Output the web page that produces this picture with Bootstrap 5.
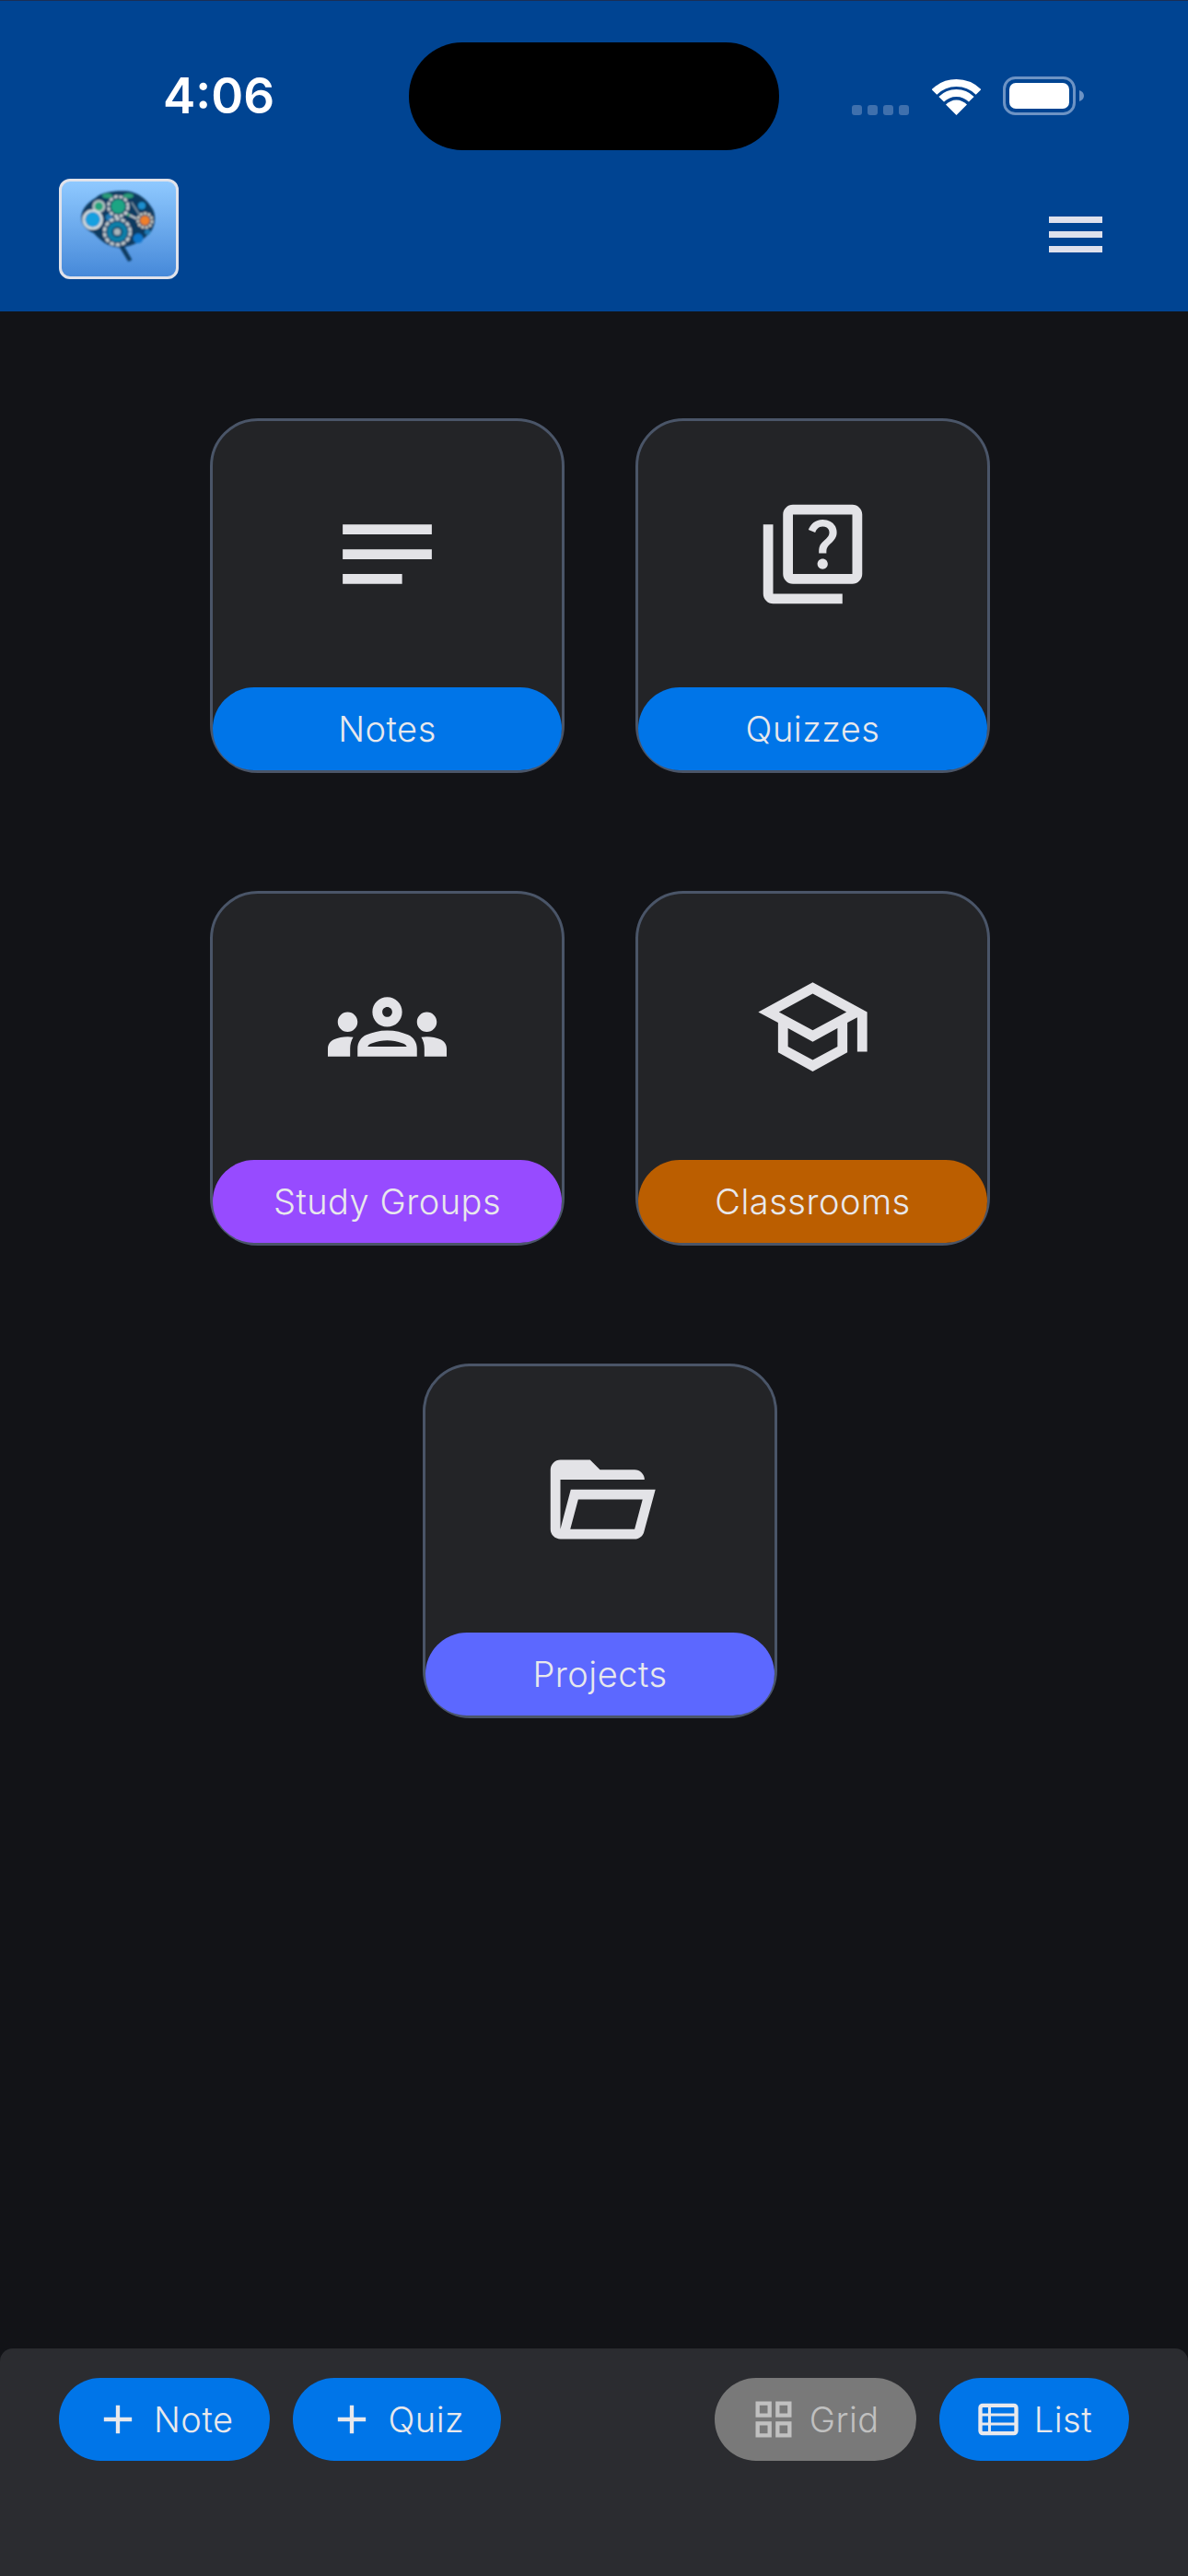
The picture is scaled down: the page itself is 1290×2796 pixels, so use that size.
<!DOCTYPE html>
<html lang="en">
<head>
  <meta charset="UTF-8">
  <meta name="viewport" content="width=device-width, initial-scale=1.0">
  <link href="https://cdn.jsdelivr.net/npm/bootstrap@5.3.2/dist/css/bootstrap.min.css" rel="stylesheet">
  <style>
    body {
      background-color: #121317;
      font-family: "Inter", "Liberation Sans", sans-serif;
      color: #e4e4e8;
    }
    .app-head {
      background-color: #004492;
      border-top: 1px solid #1b2f55;
      height: 338px;
    }
    .status-row {
      padding-top: 45px;
      height: 162px;
    }
    .status-left {
      width: 444px;
      padding-left: 177px;
    }
    .status-time {
      font-size: 53px;
      font-weight: 600;
      line-height: 1;
      color: #fff;
    }
    .island {
      width: 402px;
      height: 117px;
      background: #000;
      border-radius: 58px;
    }
    .status-right {
      padding-left: 79px;
      height: 117px;
      padding-bottom: 38px;
    }
    .sig-dot {
      width: 11px;
      height: 11px;
      border-radius: 3px;
      background: #3f70ad;
    }
    .sig-dots {
      gap: 6px;
    }
    .wifi-ico {
      margin-left: 25px;
    }
    .batt-ico {
      margin-left: 24px;
    }
    .app-nav {
      padding: 31px 93px 0 64px;
    }
    .logo-box {
      width: 130px;
      height: 109px;
      border: 3px solid #e0e2ea;
      border-radius: 12px;
      background: linear-gradient(#8fc9ff, #4689d9);
    }
    .menu-btn {
      gap: 9px;
      margin-top: 12px;
    }
    .menu-btn span {
      width: 58px;
      height: 7px;
      background: #dfe1ec;
    }
    .tile-wrap {
      padding: 116px 0 0 13px;
      column-gap: 77px;
      row-gap: 128px;
      width: 860px;
      margin-left: auto;
      margin-right: auto;
    }
    .tile {
      width: 385px;
      height: 385px;
      background: #232427;
      border: 3px solid #4a5568;
      border-radius: 52px;
    }
    .tile-ico {
      width: 129px;
      height: 129px;
      fill: #e3e3e7;
    }
    .tile-label {
      height: 90px;
      border-radius: 45px;
      font-size: 38px;
      font-weight: 300;
      letter-spacing: .5px;
      color: #e8e8ec;
    }
    .lbl-blue { background: #0075e8; }
    .lbl-purple { background: #974bff; }
    .lbl-orange { background: #bb5e00; }
    .lbl-indigo { background: #5c68ff; }
    .app-foot {
      background: #2b2c30;
      height: 247px;
      border-radius: 14px 14px 0 0;
      padding: 32px 64px 0;
    }
    .foot-btn {
      height: 90px;
      padding: 0 40px 0 38px;
      gap: 13px;
      border: 0;
      font-size: 38px;
      font-weight: 300;
      letter-spacing: .5px;
      color: #e8e8ec;
      background: #0075e8;
    }
    .foot-btn.off {
      background: #797979;
      color: #c0c0c0;
    }
    .foot-btn svg {
      width: 52px;
      height: 52px;
      fill: currentColor;
    }
    .foot-gap {
      gap: 25px;
    }
  </style>
  <title>Dashboard</title>
</head>
<body class="d-flex flex-column min-vh-100">
  <header class="app-head">
    <div class="status-row d-flex">
      <div class="status-left d-flex align-items-center"><span class="status-time">4:06</span></div>
      <div class="island"></div>
      <div class="status-right d-flex align-items-end">
        <div class="sig-dots d-flex">
          <span class="sig-dot"></span><span class="sig-dot"></span><span class="sig-dot"></span><span class="sig-dot"></span>
        </div>
        <svg class="wifi-ico" width="53" height="39" viewBox="0 0 53 39" fill="none">
          <path d="M2.5 14A34 34 0 0 1 50.5 14" stroke="#fff" stroke-width="8"/>
          <path d="M10.2 21.7A23 23 0 0 1 42.8 21.7" stroke="#fff" stroke-width="8"/>
          <path d="M26.5 39L15 27.5A16 16 0 0 1 38 27.5Z" fill="#fff"/>
        </svg>
        <svg class="batt-ico" width="88" height="42" viewBox="0 0 88 42" fill="none">
          <rect x="1.5" y="1.5" width="76" height="39" rx="12" stroke="#6d93c4" stroke-width="3"/>
          <rect x="7" y="7" width="65" height="28" rx="7" fill="#fff"/>
          <path d="M83 15C86 16 88 18 88 21S86 26 83 27Z" fill="#6d93c4"/>
        </svg>
      </div>
    </div>
    <nav class="app-nav d-flex justify-content-between align-items-center">
      <div class="logo-box">
        <svg class="d-block" width="124" height="103" viewBox="-39 -9 372 309">
          <defs><filter id="soft"><feGaussianBlur stdDeviation="2.6"/></filter></defs>
          <g filter="url(#soft)">
            <path d="M25 112C24 85 40 62 72 44C90 26 130 20 172 22C210 26 240 50 258 82C272 110 262 150 238 168C220 188 190 200 166 204L190 246 178 252 150 206C120 206 92 190 66 160C40 148 26 132 25 112Z" fill="#0d3a60"/>
            <ellipse cx="110" cy="38" rx="17" ry="8" fill="#2a9d78"/>
            <ellipse cx="178" cy="38" rx="17" ry="8" fill="#2a9d78"/>
            <circle cx="222" cy="70" r="12" fill="#1a8fcf"/>
            <circle cx="210" cy="176" r="16" fill="#1176cc"/>
            <circle cx="240" cy="155" r="9" fill="#1a7ab5"/>
            <circle cx="115" cy="108" r="11" fill="#1a7ab5"/>
            <circle cx="82" cy="72" r="21" fill="#b9c6c8"/>
            <circle cx="82" cy="72" r="14" fill="#24a57d"/>
            <circle cx="145" cy="72" r="32" fill="none" stroke="#c9d0d2" stroke-width="9" stroke-dasharray="12 5"/>
            <circle cx="145" cy="72" r="23" fill="#1fa583"/>
            <circle cx="62" cy="115" r="29" fill="none" stroke="#d3dce0" stroke-width="9"/>
            <circle cx="62" cy="115" r="24" fill="#12a0e0"/>
            <circle cx="232" cy="118" r="23" fill="none" stroke="#dcd6c8" stroke-width="8" stroke-dasharray="9 4"/>
            <circle cx="232" cy="118" r="16" fill="#ef7f2a"/>
            <circle cx="142" cy="155" r="42" fill="none" stroke="#c4ccd0" stroke-width="10" stroke-dasharray="14 5"/>
            <circle cx="142" cy="155" r="33" fill="#0c7fa8"/>
            <circle cx="142" cy="155" r="18" fill="#0c4e70"/>
            <circle cx="142" cy="155" r="11" fill="#a9b6bb"/>
            <path d="M165 92L205 112" stroke="#cdd4d8" stroke-width="6"/>
            <path d="M188 58L215 100" stroke="#8fa6b4" stroke-width="4"/>
            <circle cx="178" cy="100" r="5" fill="#2aa06f"/>
          </g>
        </svg>
      </div>
      <button class="menu-btn btn p-0 border-0 d-flex flex-column rounded-0" type="button" aria-label="Menu">
        <span></span><span></span><span></span>
      </button>
    </nav>
  </header>

  <main class="flex-grow-1">
    <div class="tile-wrap d-flex flex-wrap justify-content-center">
      <div class="tile d-flex flex-column">
        <div class="flex-grow-1 d-flex align-items-center justify-content-center">
          <svg class="tile-ico" viewBox="0 0 24 24"><path d="M3 6h18v2H3zM3 11h18v2H3zM3 16h12v2H3z"/></svg>
        </div>
        <div class="tile-label lbl-blue d-flex align-items-center justify-content-center">Notes</div>
      </div>
      <div class="tile d-flex flex-column">
        <div class="flex-grow-1 d-flex align-items-center justify-content-center">
          <svg class="tile-ico" viewBox="0 0 24 24"><path d="M4 6H2v14c0 1.1.9 2 2 2h14v-2H4V6zm16-4H8c-1.1 0-2 .9-2 2v12c0 1.1.9 2 2 2h12c1.1 0 2-.9 2-2V4c0-1.1-.9-2-2-2zm0 14H8V4h12v12zm-6.49-5.84c.41-.73 1.18-1.16 1.63-1.8.48-.68.21-1.94-1.14-1.94-.88 0-1.32.67-1.5 1.23l-1.37-.57C11.51 5.96 12.52 5 13.99 5c1.23 0 2.08.56 2.51 1.26.37.6.58 1.73.01 2.57-.63.93-1.23 1.21-1.56 1.81-.13.24-.18.4-.18 1.18h-1.52c.01-.41-.06-1.08.26-1.66zm-.56 3.79c0-.59.47-1.04 1.05-1.04.59 0 1.04.45 1.04 1.04 0 .58-.44 1.05-1.04 1.05-.58 0-1.05-.47-1.05-1.05z"/></svg>
        </div>
        <div class="tile-label lbl-blue d-flex align-items-center justify-content-center">Quizzes</div>
      </div>
      <div class="tile d-flex flex-column">
        <div class="flex-grow-1 d-flex align-items-center justify-content-center">
          <svg class="tile-ico" viewBox="0 0 24 24"><path d="M4 13c1.1 0 2-.9 2-2s-.9-2-2-2-2 .9-2 2 .9 2 2 2zm1.13 1.1c-.37-.06-.74-.1-1.13-.1-.99 0-1.93.21-2.78.58C.48 14.9 0 15.62 0 16.43V18h4.5v-1.61c0-.83.23-1.61.63-2.29zM20 13c1.1 0 2-.9 2-2s-.9-2-2-2-2 .9-2 2 .9 2 2 2zm4 3.43c0-.81-.48-1.53-1.22-1.85-.85-.37-1.79-.58-2.78-.58-.39 0-.76.04-1.13.1.4.68.63 1.46.63 2.29V18H24v-1.57zm-7.76-2.78c-1.17-.52-2.61-.9-4.24-.9-1.63 0-3.07.39-4.24.9C6.68 14.13 6 15.21 6 16.39V18h12v-1.61c0-1.18-.68-2.26-1.76-2.74zM8.07 16c.09-.23.13-.39.91-.69.97-.38 1.99-.56 3.02-.56s2.05.18 3.02.56c.77.3.81.46.91.69H8.07zM12 8c.55 0 1 .45 1 1s-.45 1-1 1-1-.45-1-1 .45-1 1-1m0-2c-1.66 0-3 1.34-3 3s1.34 3 3 3 3-1.34 3-3-1.34-3-3-3z"/></svg>
        </div>
        <div class="tile-label lbl-purple d-flex align-items-center justify-content-center">Study Groups</div>
      </div>
      <div class="tile d-flex flex-column">
        <div class="flex-grow-1 d-flex align-items-center justify-content-center">
          <svg class="tile-ico" viewBox="0 0 24 24"><path d="M12 3 1 9l4 2.18v6L12 21l7-3.82v-6l2-1.09V17h2V9L12 3zm6.82 6L12 12.72 5.18 9 12 5.28 18.82 9zM17 15.99l-5 2.73-5-2.73v-3.72L12 15l5-2.73v3.72z"/></svg>
        </div>
        <div class="tile-label lbl-orange d-flex align-items-center justify-content-center">Classrooms</div>
      </div>
      <div class="tile d-flex flex-column">
        <div class="flex-grow-1 d-flex align-items-center justify-content-center">
          <svg class="tile-ico" viewBox="0 0 24 24"><path d="M6.1 10L4 18V8H21A2 2 0 0 0 19 6H12L10 4H4A2 2 0 0 0 2 6V18A2 2 0 0 0 4 20H19C19.9 20 20.7 19.4 20.9 18.5L23.2 10H6.1M19 18H6L7.6 12H20.6L19 18Z"/></svg>
        </div>
        <div class="tile-label lbl-indigo d-flex align-items-center justify-content-center">Projects</div>
      </div>
    </div>
  </main>

  <footer class="app-foot d-flex justify-content-between align-items-start">
    <div class="foot-gap d-flex">
      <button class="foot-btn btn rounded-pill d-flex align-items-center" type="button">
        <svg viewBox="0 0 24 24"><path d="M19 13h-6v6h-2v-6H5v-2h6V5h2v6h6v2z"/></svg>Note
      </button>
      <button class="foot-btn btn rounded-pill d-flex align-items-center" type="button">
        <svg viewBox="0 0 24 24"><path d="M19 13h-6v6h-2v-6H5v-2h6V5h2v6h6v2z"/></svg>Quiz
      </button>
    </div>
    <div class="foot-gap d-flex">
      <button class="foot-btn off btn rounded-pill d-flex align-items-center" type="button">
        <svg viewBox="0 0 24 24"><path d="M3 3v8h8V3H3zm6 6H5V5h4v4zm-6 4v8h8v-8H3zm6 6H5v-4h4v4zm4-16v8h8V3h-8zm6 6h-4V5h4v4zm-6 4v8h8v-8h-8zm6 6h-4v-4h4v4z"/></svg>Grid
      </button>
      <button class="foot-btn btn rounded-pill d-flex align-items-center" type="button">
        <svg viewBox="0 0 24 24"><rect x="3" y="5" width="18" height="14" rx="1.2" fill="none" stroke="currentColor" stroke-width="2"/><path d="M3 9.7h18M3 14.3h18M7.6 5v14" fill="none" stroke="currentColor" stroke-width="1.4"/></svg>List
      </button>
    </div>
  </footer>
</body>
</html>
